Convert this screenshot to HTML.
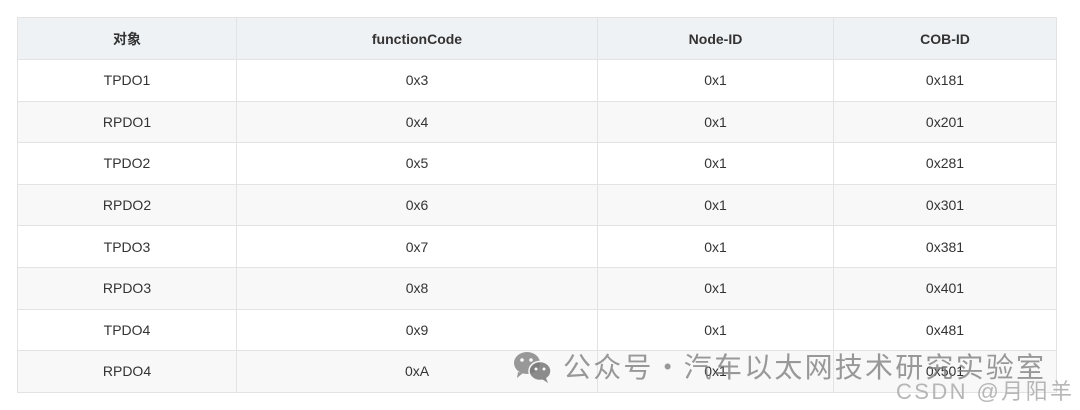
<!DOCTYPE html>
<html><head><meta charset="utf-8"><style>
body{margin:0;width:1080px;height:410px;background:#fff;position:relative;overflow:hidden;font-family:"Liberation Sans","Noto Sans CJK SC",sans-serif;}
table{position:absolute;left:17px;top:17px;border-collapse:collapse;width:1040px;font-size:14px;color:#333;}
td,th{border:1px solid #e3e3e3;text-align:center;padding:0;}
th{height:41px;background:#eff2f5;font-weight:bold;color:#333;}
td{height:40.6px;}
tr:nth-child(odd) td{background:#f8f8f8;}
.wm{position:absolute;left:563px;top:346px;font-size:28px;color:rgba(120,120,120,.75);letter-spacing:2.2px;white-space:nowrap;font-family:"Noto Sans CJK SC",sans-serif;}
.cs{position:absolute;left:896px;top:374px;font-size:22px;letter-spacing:2.4px;color:rgba(170,170,170,.85);white-space:nowrap;}
</style></head><body>
<table>
<tr><th style="width:218px">对象</th><th style="width:360px">functionCode</th><th style="width:235px">Node-ID</th><th>COB-ID</th></tr>
<tr><td>TPDO1</td><td>0x3</td><td>0x1</td><td>0x181</td></tr>
<tr><td>RPDO1</td><td>0x4</td><td>0x1</td><td>0x201</td></tr>
<tr><td>TPDO2</td><td>0x5</td><td>0x1</td><td>0x281</td></tr>
<tr><td>RPDO2</td><td>0x6</td><td>0x1</td><td>0x301</td></tr>
<tr><td>TPDO3</td><td>0x7</td><td>0x1</td><td>0x381</td></tr>
<tr><td>RPDO3</td><td>0x8</td><td>0x1</td><td>0x401</td></tr>
<tr><td>TPDO4</td><td>0x9</td><td>0x1</td><td>0x481</td></tr>
<tr><td>RPDO4</td><td>0xA</td><td>0x1</td><td>0x501</td></tr>
</table>
<svg style="position:absolute;left:512px;top:350px" width="42" height="34" viewBox="0 0 42 34">
<ellipse cx="15" cy="13" rx="13" ry="11" fill="rgba(120,120,120,.75)"/>
<path d="M6 22 L5 28 L11 23Z" fill="rgba(120,120,120,.75)"/>
<ellipse cx="28" cy="21" rx="11" ry="9.5" fill="rgba(120,120,120,.85)" stroke="#f8f8f8" stroke-width="1.5"/>
<path d="M34 28 L36 33 L30 29Z" fill="rgba(120,120,120,.85)"/>
<circle cx="10" cy="10" r="1.8" fill="#f8f8f8"/><circle cx="19" cy="10" r="1.8" fill="#f8f8f8"/>
<circle cx="24" cy="19" r="1.5" fill="#f8f8f8"/><circle cx="32" cy="19" r="1.5" fill="#f8f8f8"/>
</svg>
<div class="wm">公众号·汽车以太网技术研究实验室</div>
<div class="cs">CSDN @月阳羊</div>
</body></html>
